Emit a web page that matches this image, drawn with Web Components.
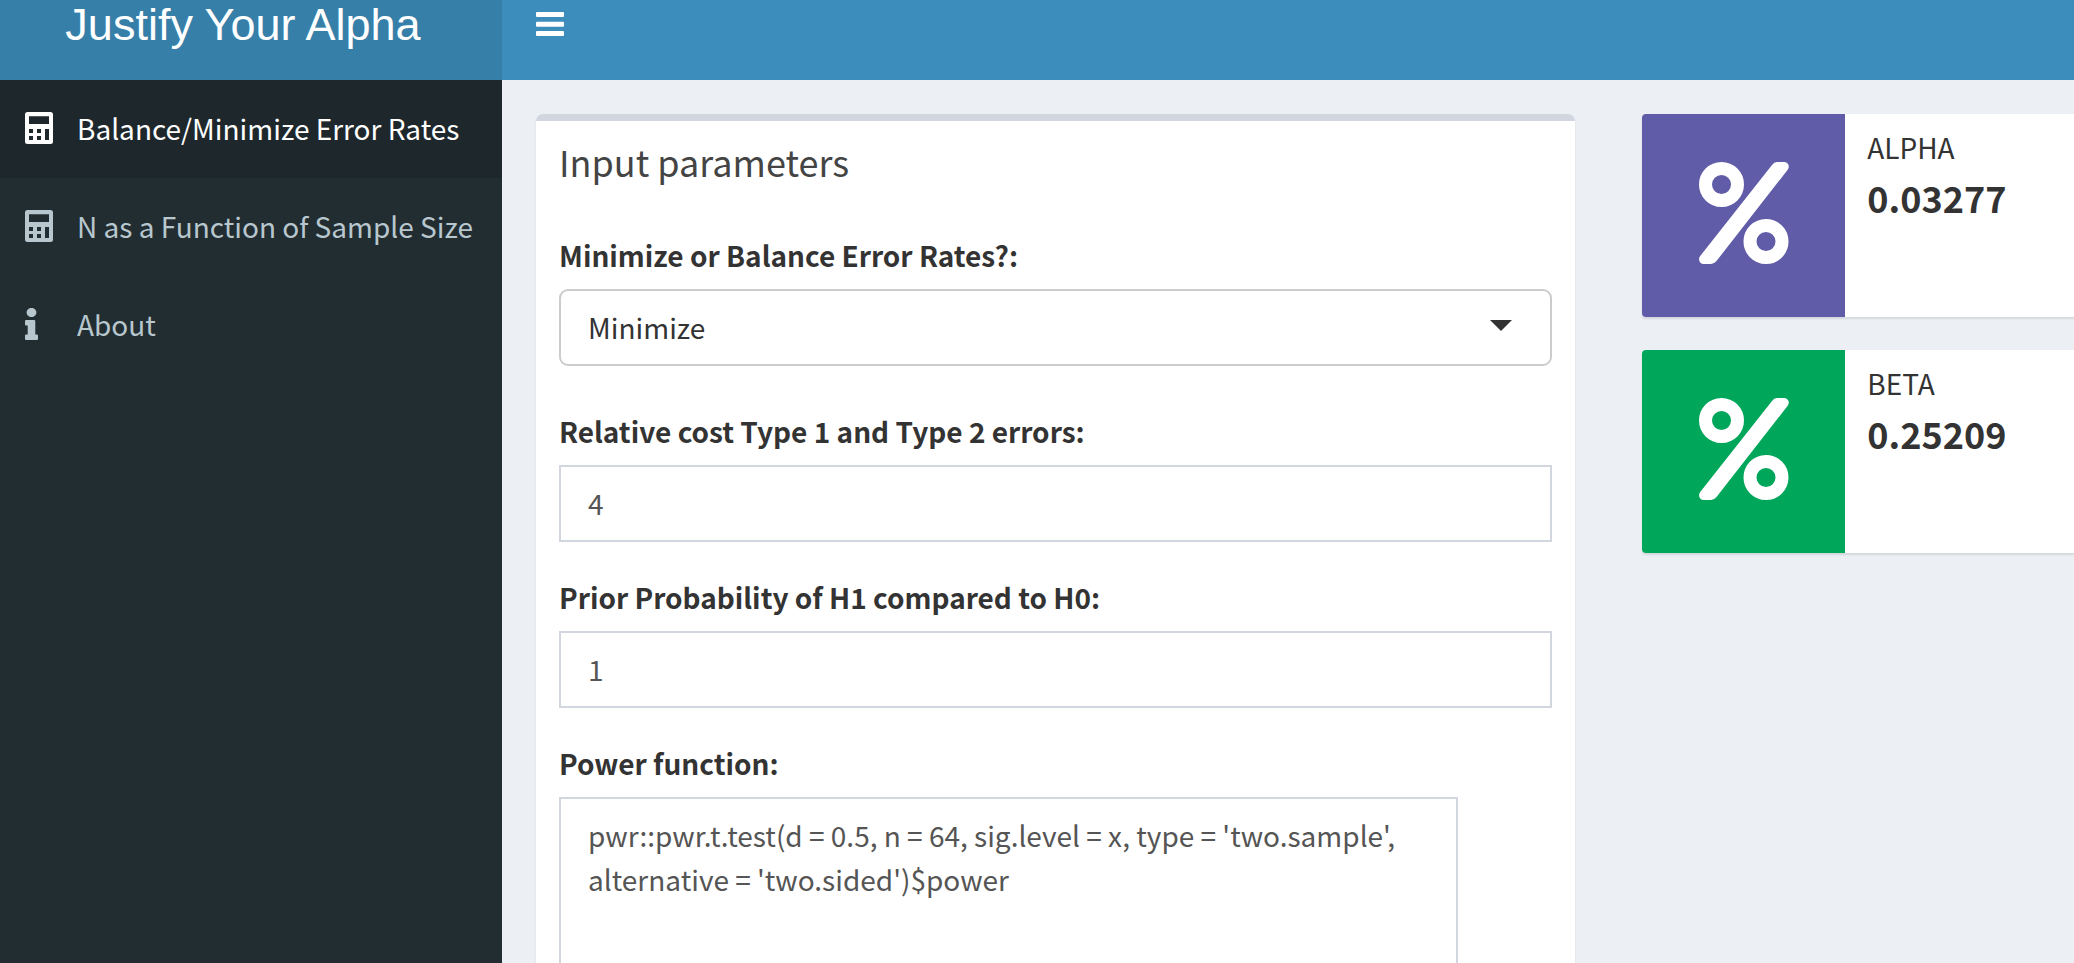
<!DOCTYPE html>
<html lang="en">
<head>
<meta charset="utf-8">
<title>Justify Your Alpha</title>
<style>
  html, body { height: 100%; margin: 0; }
  body {
    overflow: hidden;
    background: #ecf0f5;
    color: #333;
    font-family: "Noto Sans CJK SC", "Noto Sans", sans-serif;
    font-size: 28px;
    line-height: 44px;
  }
</style>
</head>
<body>
<alpha-dashboard>
  <top-bar slot="header" heading="Justify Your Alpha"></top-bar>
  <side-menu slot="sidebar">
    <menu-entry icon="calculator" active>Balance/Minimize Error Rates</menu-entry>
    <menu-entry icon="calculator">N as a Function of Sample Size</menu-entry>
    <menu-entry icon="info">About</menu-entry>
  </side-menu>
  <panel-box heading="Input parameters">
    <form-field kind="select" label="Minimize or Balance Error Rates?:" value="Minimize"></form-field>
    <form-field kind="number" label="Relative cost Type 1 and Type 2 errors:" value="4"></form-field>
    <form-field kind="number" label="Prior Probability of H1 compared to H0:" value="1"></form-field>
    <form-field kind="textarea" label="Power function:" value="pwr::pwr.t.test(d = 0.5, n = 64, sig.level = x, type = 'two.sample', alternative = 'two.sided')$power"></form-field>
  </panel-box>
  <info-box slot="results" heading="Alpha" color="#605ca8">0.03277</info-box>
  <info-box slot="results" heading="Beta" color="#00a65a">0.25209</info-box>
</alpha-dashboard>

<script>
const ICONS = {
  calculator: '<svg width="28" height="32" viewBox="0 0 448 512" fill="currentColor" fill-rule="evenodd" aria-hidden="true"><path d="M40 0H408Q448 0 448 40V472Q448 512 408 512H40Q0 512 0 472V40Q0 0 40 0ZM64 68V192H384V68ZM64 272V336H128V272ZM192 272V336H256V272ZM64 384V448H128V384ZM192 384V448H256V384ZM320 272V448H384V272Z"/></svg>',
  info: '<svg width="13" height="32" viewBox="0 0 192 512" preserveAspectRatio="none" fill="currentColor" aria-hidden="true"><path d="M20 424.2h20V279.800H20c-11 0-20-9-20-20V212c0-11 9-20 20-20h112c11 0 20 9 20 20v212.200h20c11 0 20 9 20 20V492c0 11-9 20-20 20H20c-11 0-20-9-20-20v-47.800c0-11 9-20 20-20zM96 0C56.200 0 24 32.200 24 72s32.200 72 72 72 72-32.200 72-72S135.800 0 96 0z"/></svg>',
  bars: '<svg width="28" height="24" viewBox="0 0 28 24" fill="currentColor" aria-hidden="true"><rect width="28" height="5" rx="1"/><rect y="9.700" width="28" height="5" rx="1"/><rect y="19" width="28" height="5" rx="1"/></svg>',
  percent: '<svg width="90" height="102" viewBox="0 0 90 102" aria-hidden="true"><g fill="none" stroke="currentColor" stroke-width="13"><circle cx="22.500" cy="22.500" r="16"/><circle cx="67" cy="79.500" r="16"/></g><path fill="currentColor" d="M78 0H84.500C89 0 91.500 4 88.500 8L17.500 99Q15 102 12 102H5C1 102-1.500 97.500 1.200 94L73 3Q75 0 78 0Z"/></svg>'
};

class ShadowElement extends HTMLElement {
  connectedCallback() {
    if (!this.shadowRoot) this.attachShadow({ mode: 'open' }).innerHTML = this.render();
  }
  attr(name) {
    return (this.getAttribute(name) || '').replace(/&/g, '&amp;').replace(/</g, '&lt;').replace(/"/g, '&quot;');
  }
}

customElements.define('alpha-dashboard', class extends ShadowElement {
  render() {
    return `<style>
      :host { display: grid; grid-template: auto 1fr / 502px 1fr; height: 100vh; overflow: hidden; }
      .head { grid-column: 1 / -1; }
      .side { background: #222d32; }
      main {
        display: grid; grid-template-columns: 65fr 27fr; gap: 67px; align-items: start;
        padding: 34px 0 0 34px; min-width: 0; min-height: 0; overflow: hidden;
      }
      .results { display: grid; gap: 33px; }
    </style>
    <div class="head"><slot name="header"></slot></div>
    <div class="side"><slot name="sidebar"></slot></div>
    <main><slot></slot><div class="results"><slot name="results"></slot></div></main>`;
  }
});

customElements.define('top-bar', class extends ShadowElement {
  render() {
    return `<style>
      :host { display: block; }
      header { display: grid; grid-template-columns: 502px 1fr; height: 80px; background: #3c8dbc; color: #fff; }
      .logo {
        background: #367fa9; color: inherit; text-align: center; text-decoration: none;
        font-family: "Liberation Sans", Arial, sans-serif; font-size: 45px; line-height: 50px; padding-right: 16px;
      }
      nav { display: flex; align-items: flex-start; }
      button { display: flex; border: 0; background: none; color: inherit; padding: 12px 34px; }
    </style>
    <header>
      <a class="logo" href="#">${this.attr('heading')}</a>
      <nav><button type="button" aria-label="Toggle navigation">${ICONS.bars}</button></nav>
    </header>`;
  }
});

customElements.define('side-menu', class extends ShadowElement {
  render() {
    return `<style>
      :host { display: block; }
      nav { display: flex; flex-direction: column; }
    </style>
    <nav><slot></slot></nav>`;
  }
});

customElements.define('menu-entry', class extends ShadowElement {
  render() {
    return `<style>
      :host { display: block; color: #b8c7ce; }
      :host([active]) { color: #fff; background: #1e282c; }
      a { display: flex; align-items: center; box-sizing: border-box; height: 98px; padding: 0 0 2px 25px; color: inherit; text-decoration: none; white-space: nowrap; }
      .icon { display: flex; width: 52px; }
    </style>
    <a href="#"><span class="icon">${ICONS[this.getAttribute('icon')]}</span><span><slot></slot></span></a>`;
  }
});

customElements.define('panel-box', class extends ShadowElement {
  render() {
    return `<style>
      :host {
        display: block; min-width: 0; background: #fff; border-top: 7px solid #d2d6de; border-radius: 7px;
        box-shadow: 0 2px 2px rgba(0, 0, 0, .1);
      }
      h3 { margin: 0; padding: 18px 23px 27px; font-size: 36px; font-weight: 400; line-height: 44px; color: #444; }
      .body { display: grid; gap: 33px; padding: 23px; }
    </style>
    <h3>${this.attr('heading')}</h3>
    <div class="body"><slot></slot></div>`;
  }
});

customElements.define('form-field', class extends ShadowElement {
  control() {
    const value = this.attr('value');
    switch (this.getAttribute('kind')) {
      case 'select':
        return `<div class="pick"><select id="control"><option selected>${value}</option><option>Balance</option></select></div>`;
      case 'textarea':
        return `<textarea id="control" spellcheck="false">${value}</textarea>`;
      default:
        return `<input id="control" type="number" value="${value}">`;
    }
  }
  render() {
    return `<style>
      :host { display: block; }
      :host([kind="select"]) { padding-bottom: 10px; }
      label { display: block; font-weight: 700; margin-bottom: 12px; }
      input, select, textarea {
        display: block; box-sizing: border-box; width: 100%; height: 77px; margin: 0; padding: 0 27px 2px;
        border: 2px solid #d2d6de; border-radius: 0; background: #fff; color: #555;
        font: inherit; appearance: none; outline: 0;
      }
      input { appearance: textfield; }
      input::-webkit-inner-spin-button { appearance: none; margin: 0; }
      .pick { position: relative; }
      .pick::after {
        content: ""; position: absolute; right: 40px; top: 31px; pointer-events: none;
        border: 11px solid transparent; border-top-color: #333; border-bottom: 0;
      }
      select { border-color: #ccc; border-radius: 9px; color: #333; }
      textarea { width: 899px; max-width: 100%; height: 225px; padding: 14px 27px; resize: none; overflow: hidden; }
    </style>
    <label for="control">${this.attr('label')}</label>
    ${this.control()}`;
  }
});

customElements.define('info-box', class extends ShadowElement {
  render() {
    return `<style>
      :host {
        display: flex; height: 203px; background: #fff; border-radius: 4px 0 0 4px; overflow: hidden;
        box-shadow: 0 2px 2px rgba(0, 0, 0, .1);
      }
      .icon { display: flex; align-items: center; justify-content: center; flex: none; width: 203px; padding-bottom: 5px; box-sizing: border-box; color: #fff; background: ${this.attr('color')}; }
      .text { padding: 11px 22px; }
      .name { text-transform: uppercase; }
      .value { font-size: 36px; font-weight: 700; line-height: 56px; }
    </style>
    <div class="icon">${ICONS.percent}</div>
    <div class="text"><div class="name">${this.attr('heading')}</div><div class="value"><slot></slot></div></div>`;
  }
});
</script>
</body>
</html>
